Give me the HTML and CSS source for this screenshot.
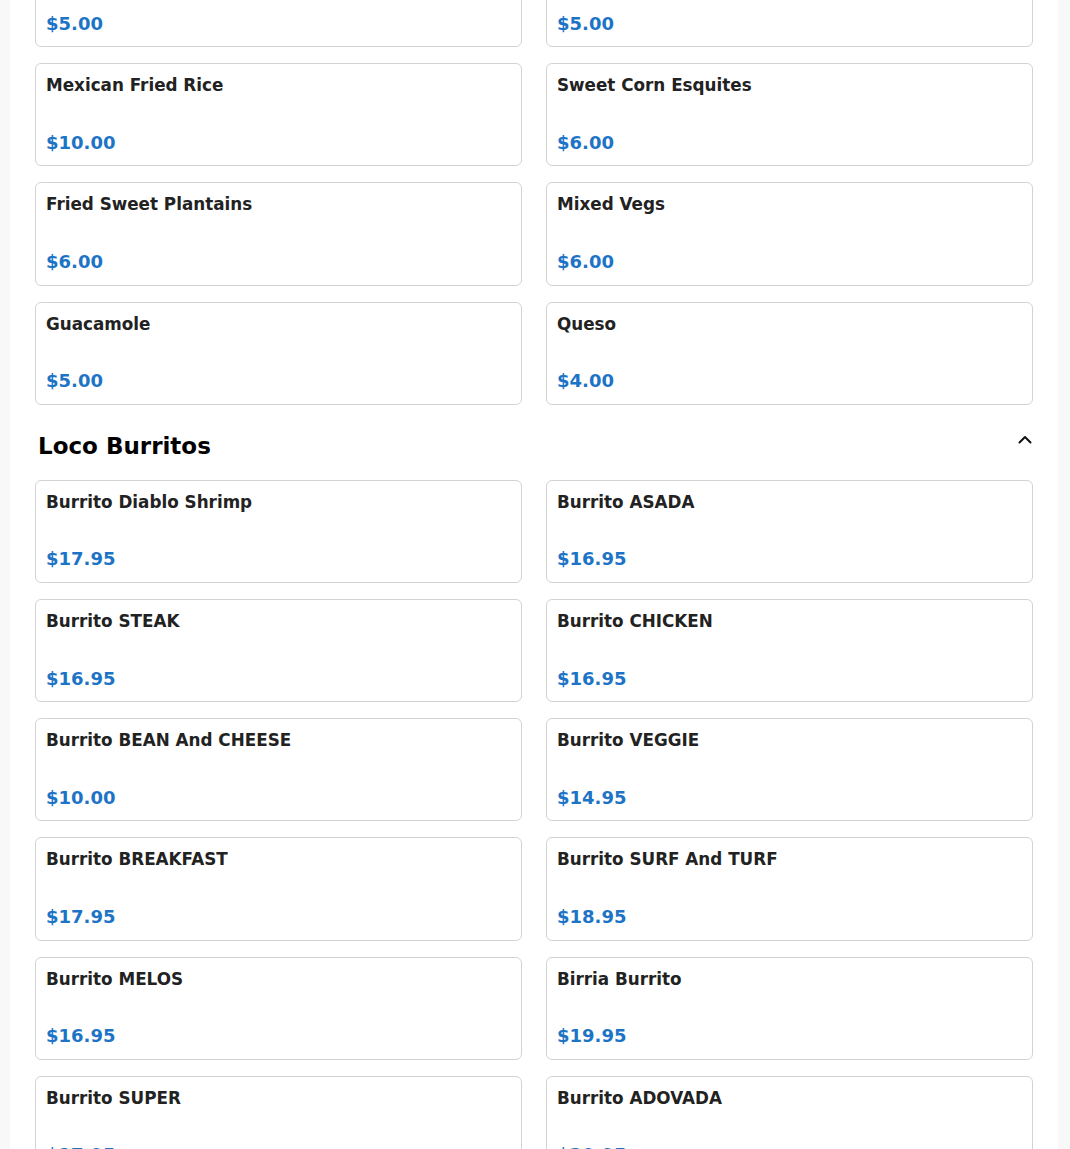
FILE: index.html
```html
<!DOCTYPE html>
<html lang="en">
<head>
<meta charset="utf-8">
<title>Menu</title>
<link rel="stylesheet" href="styles.css">
</head>
<body>
<main class="page">
  <div class="menu">
    <section class="section section--cut">
      <div class="grid">
        <div class="card"><div class="card-title">&nbsp;</div><div class="card-price">$5.00</div></div>
        <div class="card"><div class="card-title">&nbsp;</div><div class="card-price">$5.00</div></div>
        <div class="card"><div class="card-title">Mexican Fried Rice</div><div class="card-price">$10.00</div></div>
        <div class="card"><div class="card-title">Sweet Corn Esquites</div><div class="card-price">$6.00</div></div>
        <div class="card"><div class="card-title">Fried Sweet Plantains</div><div class="card-price">$6.00</div></div>
        <div class="card"><div class="card-title">Mixed Vegs</div><div class="card-price">$6.00</div></div>
        <div class="card"><div class="card-title">Guacamole</div><div class="card-price">$5.00</div></div>
        <div class="card"><div class="card-title">Queso</div><div class="card-price">$4.00</div></div>
      </div>
    </section>
    <section class="section">
      <div class="section-head">
        <h2 class="section-title">Loco Burritos</h2>
        <svg class="chevron" width="16" height="16" viewBox="0 0 16 16" aria-hidden="true"><path d="M2.5 10.5 L8 5 L13.5 10.5" fill="none" stroke="#111" stroke-width="2" stroke-linecap="round" stroke-linejoin="round"/></svg>
      </div>
      <div class="grid">
        <div class="card"><div class="card-title">Burrito Diablo Shrimp</div><div class="card-price">$17.95</div></div>
        <div class="card"><div class="card-title">Burrito ASADA</div><div class="card-price">$16.95</div></div>
        <div class="card"><div class="card-title">Burrito STEAK</div><div class="card-price">$16.95</div></div>
        <div class="card"><div class="card-title">Burrito CHICKEN</div><div class="card-price">$16.95</div></div>
        <div class="card"><div class="card-title">Burrito BEAN And CHEESE</div><div class="card-price">$10.00</div></div>
        <div class="card"><div class="card-title">Burrito VEGGIE</div><div class="card-price">$14.95</div></div>
        <div class="card"><div class="card-title">Burrito BREAKFAST</div><div class="card-price">$17.95</div></div>
        <div class="card"><div class="card-title">Burrito SURF And TURF</div><div class="card-price">$18.95</div></div>
        <div class="card"><div class="card-title">Burrito MELOS</div><div class="card-price">$16.95</div></div>
        <div class="card"><div class="card-title">Birria Burrito</div><div class="card-price">$19.95</div></div>
        <div class="card"><div class="card-title">Burrito SUPER</div><div class="card-price">$17.95</div></div>
        <div class="card"><div class="card-title">Burrito ADOVADA</div><div class="card-price">$20.95</div></div>
      </div>
    </section>
  </div>
</main>
</body>
</html>
```
FILE: styles.css
```css
html, body {
  margin: 0;
  padding: 0;
  background: #f8f8f9;
  font-family: "DejaVu Sans", sans-serif;
  overflow: hidden;
  height: 1149px;
}

.page {
  margin-left: 10px;
  width: 1048px;
  background: #ffffff;
  min-height: 1149px;
}

.menu {
  padding: 0 25px 0 25px;
  margin-top: -56px;
}

.section-head {
  display: flex;
  align-items: flex-start;
  justify-content: space-between;
  margin: 28px 0 20px 0;
  padding: 0 0 0 3px;
}

.section-title {
  margin: 0;
  font-size: 23px;
  line-height: 27px;
  font-weight: 700;
  color: #000;
}

.chevron {
  margin-top: -1px;
  flex: none;
}

.grid {
  display: grid;
  grid-template-columns: 1fr 1fr;
  column-gap: 24px;
  row-gap: 16px;
}

.card {
  border: 1px solid #d3d3d3;
  border-radius: 6px;
  padding: 11px 10px 12px 10px;
  display: flex;
  flex-direction: column;
  gap: 35px;
  background: #fff;
}

.card-title {
  font-size: 16.8px;
  line-height: 21.6px;
  font-weight: 700;
  color: #222222;
}

.card-price {
  font-size: 18px;
  line-height: 21.6px;
  font-weight: 700;
  color: #1d74c6;
}
```
